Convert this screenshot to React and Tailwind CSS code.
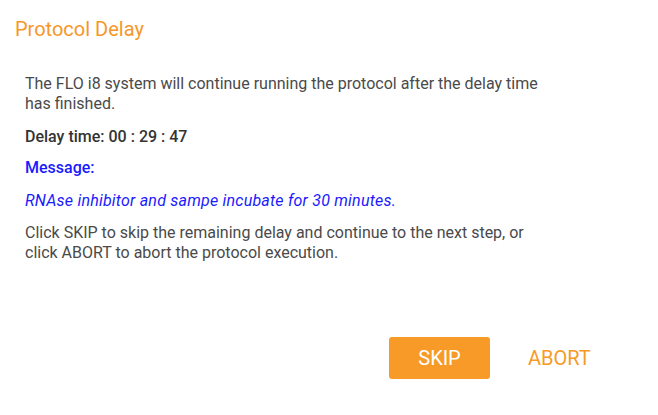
export default function App() {
  return (
    <div className="w-[658px] h-[415px] bg-white flex flex-col" style={{ fontFamily: "Roboto, sans-serif" }}>
      <div className="pl-[15px] pt-[17px] text-[20px] leading-[24px] text-[#f7972a]">Protocol Delay</div>
      <div className="pl-[25px] w-[550px] pt-[33px] text-[16px] leading-[20px] text-[#4a4a4a] flex flex-col">
        <p>The FLO i8 system will continue running the protocol after the delay time has finished.</p>
        <p className="mt-[13px] font-medium text-[#333]">Delay time: 00 : 29 : 47</p>
        <p className="mt-[11px] font-medium text-[#1a1aff]">Message:</p>
        <p className="mt-[13px] italic tracking-[0.22px] text-[#1a1aff]">RNAse inhibitor and sampe incubate for 30 minutes.</p>
        <p className="mt-[12px]">Click SKIP to skip the remaining delay and continue to the next step, or click ABORT to abort the protocol execution.</p>
      </div>
      <div className="flex-1" />
      <div className="flex items-center pb-[36px] pl-[389px]">
        <button className="w-[101px] h-[42px] rounded-[3px] bg-[#f89a28] text-white text-[20px]">SKIP</button>
        <button className="ml-[38px] text-[#f89a28] text-[20px]">ABORT</button>
      </div>
    </div>
  );
}
